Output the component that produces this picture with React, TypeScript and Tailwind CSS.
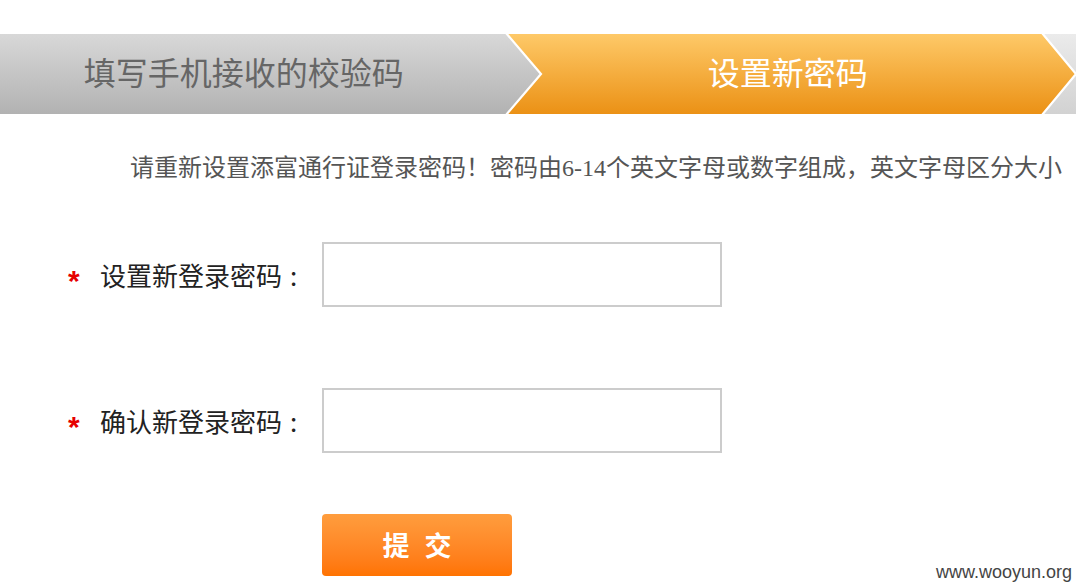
const SANS = "font-['Noto_Sans_CJK_SC','Noto_Sans',sans-serif]";
const SERIF = "font-['Liberation_Serif','Noto_Sans_CJK_SC',serif]";

function StepBar() {
  return (
    <div className="relative mt-[34px] h-[80px]">
      <svg
        className="absolute inset-0"
        width="1076"
        height="80"
        viewBox="0 0 1076 80"
      >
        <defs>
          <linearGradient id="grey" x1="0" y1="0" x2="0" y2="1">
            <stop offset="0" stopColor="#d8d8d8" />
            <stop offset="1" stopColor="#b2b2b2" />
          </linearGradient>
          <linearGradient id="greyLight" x1="0" y1="0" x2="0" y2="1">
            <stop offset="0" stopColor="#ebebeb" />
            <stop offset="1" stopColor="#d2d2d2" />
          </linearGradient>
          <linearGradient id="orange" x1="0" y1="0" x2="0" y2="1">
            <stop offset="0" stopColor="#fec968" />
            <stop offset="1" stopColor="#eb9115" />
          </linearGradient>
        </defs>
        <rect x="0" y="0" width="1076" height="80" fill="url(#greyLight)" />
        <rect x="0" y="0" width="560" height="80" fill="url(#grey)" />
        <polygon
          points="506,0 1042,0 1076,40 1042,80 506,80 541,40"
          fill="url(#orange)"
        />
        <polyline
          points="506,-1 541,40 506,81"
          fill="none"
          stroke="#fff"
          strokeWidth="2.2"
        />
        <polyline
          points="1042,-1 1076,40 1042,81"
          fill="none"
          stroke="#fff"
          strokeWidth="2.2"
        />
      </svg>
      <div className={`relative flex h-full items-center pb-[7px] text-[32px] ${SANS}`}>
        <div className="w-[490px] pl-[2px] text-center text-[#666]">填写手机接收的校验码</div>
        <div className="w-[596px] pl-[14px] text-center text-white">设置新密码</div>
      </div>
    </div>
  );
}

function Field({ label }: { label: string }) {
  return (
    <div className="flex items-center pl-[68px]">
      <div className={`flex w-[254px] items-center text-[26px] text-[#222] ${SANS}`}>
        <span className="w-[32px] pt-[12px] font-['Liberation_Sans',sans-serif] text-[30px] font-bold leading-none text-[#e60000]">
          *
        </span>
        <span>{label}</span>
        <span className="pl-[8px]">:</span>
      </div>
      <input
        type="password"
        className="h-[65px] w-[400px] border-2 border-[#cccccc] bg-white outline-none"
      />
    </div>
  );
}

export default function App() {
  return (
    <div className="relative h-[584px] w-[1076px] overflow-hidden bg-white">
      <StepBar />

      <p className={`mt-[36px] pl-[130px] text-[24px] leading-[36px] text-[#555] ${SERIF}`}>
        请重新设置添富通行证登录密码！密码由6-14个英文字母或数字组成，英文字母区分大小
      </p>

      <div className="mt-[56px] flex flex-col gap-[81px]">
        <Field label="设置新登录密码" />
        <Field label="确认新登录密码" />
      </div>

      <div className="mt-[61px] pl-[322px]">
        <button
          type="button"
          className={`flex h-[62px] w-[190px] items-center justify-center gap-[15px] rounded-[4px] bg-gradient-to-b from-[#ff9d3d] to-[#ff7300] text-[27px] font-bold text-white ${SANS}`}
        >
          <span>提</span>
          <span>交</span>
        </button>
      </div>

      <div className="absolute bottom-[1px] right-[4px] bg-white pl-[6px] font-['Liberation_Sans',sans-serif] text-[18px] leading-[22px] text-[#444]">
        www.wooyun.org
      </div>
    </div>
  );
}
